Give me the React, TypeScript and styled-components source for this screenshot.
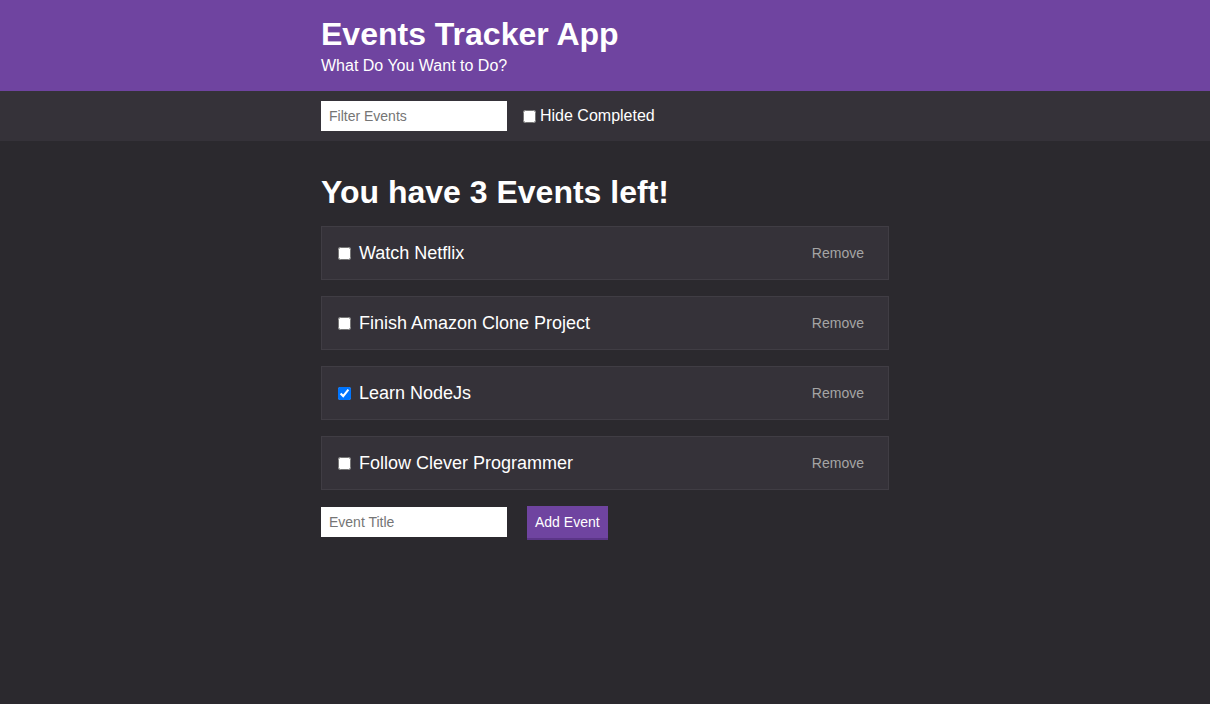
import React, { useState } from 'react';
import styled, { createGlobalStyle } from 'styled-components';

const GlobalStyle = createGlobalStyle`
  html, body {
    margin: 0;
    padding: 0;
    background: #2b292e;
    font-family: "Liberation Sans", Arial, sans-serif;
    color: #fff;
  }
`;

const Page = styled.div`
  min-height: 704px;
  background: #2b292e;
`;

const Container = styled.div`
  width: 568px;
  margin: 0 auto;
  padding: 0 16px;
  box-sizing: content-box;
`;

const Header = styled.header`
  background: #6f44a0;
  height: 91px;
  box-sizing: border-box;
  padding-top: 15px;
`;

const Title = styled.h1`
  margin: 0;
  font-size: 32px;
  font-weight: bold;
  line-height: 38px;
`;

const Subtitle = styled.h2`
  margin: 2px 0 0;
  font-size: 16px;
  font-weight: normal;
  line-height: 22px;
`;

const FilterBar = styled.div`
  background: #353239;
  height: 50px;
  display: flex;
  align-items: center;
`;

const FilterRow = styled(Container)`
  display: flex;
  align-items: center;
  gap: 16px;
`;

const TextInput = styled.input`
  width: 186px;
  height: 30px;
  box-sizing: border-box;
  border: none;
  padding: 0 8px;
  font-family: "Liberation Sans", Arial, sans-serif;
  font-size: 14px;
  outline: none;
  background: #fff;
  &::placeholder {
    color: #757575;
  }
`;

const CheckLabel = styled.label`
  display: flex;
  align-items: center;
  font-size: 16px;
  color: #fff;
  input {
    margin: 0 4px 0 0;
    width: 13px;
    height: 13px;
  }
`;

const Main = styled(Container)`
  padding-top: 33px;
`;

const Heading = styled.h2`
  margin: 0 0 16px;
  font-size: 32px;
  font-weight: bold;
  line-height: 36px;
`;

const EventRow = styled.div`
  display: flex;
  align-items: center;
  height: 54px;
  box-sizing: border-box;
  background: #353239;
  border: 1px solid #403d44;
  padding: 0 24px 0 16px;
  margin-bottom: 16px;
`;

const EventLabel = styled.label`
  flex: 1;
  display: flex;
  align-items: center;
  font-size: 18px;
  color: #fff;
  input {
    margin: 0 8px 0 0;
    width: 13px;
    height: 13px;
  }
`;

const RemoveButton = styled.button`
  background: none;
  border: none;
  padding: 0;
  color: #a5a5a5;
  font-family: "Liberation Sans", Arial, sans-serif;
  font-size: 14px;
  cursor: pointer;
`;

const AddForm = styled.form`
  display: flex;
  align-items: flex-start;
  gap: 20px;
  ${TextInput} {
    margin-top: 1px;
  }
`;

const AddButton = styled.button`
  background: #6f44a0;
  color: #fff;
  border: none;
  border-bottom: 2px solid #5b3587;
  height: 34px;
  padding: 0 8px;
  font-family: "Liberation Sans", Arial, sans-serif;
  font-size: 14px;
  cursor: pointer;
`;

type EventItem = { id: number; title: string; done: boolean };

const initial: EventItem[] = [
  { id: 1, title: 'Watch Netflix', done: false },
  { id: 2, title: 'Finish Amazon Clone Project', done: false },
  { id: 3, title: 'Learn NodeJs', done: true },
  { id: 4, title: 'Follow Clever Programmer', done: false },
];

export default function App() {
  const [events, setEvents] = useState<EventItem[]>(initial);
  const [filter, setFilter] = useState('');
  const [hideDone, setHideDone] = useState(false);
  const [title, setTitle] = useState('');

  const left = events.filter((e) => !e.done).length;
  const shown = events.filter(
    (e) =>
      e.title.toLowerCase().includes(filter.toLowerCase()) &&
      !(hideDone && e.done)
  );

  return (
    <Page>
      <GlobalStyle />
      <Header>
        <Container>
          <Title>Events Tracker App</Title>
          <Subtitle>What Do You Want to Do?</Subtitle>
        </Container>
      </Header>
      <FilterBar>
        <FilterRow>
          <TextInput
            placeholder="Filter Events"
            value={filter}
            onChange={(e) => setFilter(e.target.value)}
          />
          <CheckLabel>
            <input
              type="checkbox"
              checked={hideDone}
              onChange={(e) => setHideDone(e.target.checked)}
            />
            Hide Completed
          </CheckLabel>
        </FilterRow>
      </FilterBar>
      <Main>
        <Heading>You have {left} Events left!</Heading>
        {shown.map((ev) => (
          <EventRow key={ev.id}>
            <EventLabel>
              <input
                type="checkbox"
                checked={ev.done}
                onChange={() =>
                  setEvents(
                    events.map((x) =>
                      x.id === ev.id ? { ...x, done: !x.done } : x
                    )
                  )
                }
              />
              {ev.title}
            </EventLabel>
            <RemoveButton
              onClick={() => setEvents(events.filter((x) => x.id !== ev.id))}
            >
              Remove
            </RemoveButton>
          </EventRow>
        ))}
        <AddForm
          onSubmit={(e) => {
            e.preventDefault();
            if (!title.trim()) return;
            setEvents([...events, { id: Date.now(), title, done: false }]);
            setTitle('');
          }}
        >
          <TextInput
            placeholder="Event Title"
            value={title}
            onChange={(e) => setTitle(e.target.value)}
          />
          <AddButton type="submit">Add Event</AddButton>
        </AddForm>
      </Main>
    </Page>
  );
}
